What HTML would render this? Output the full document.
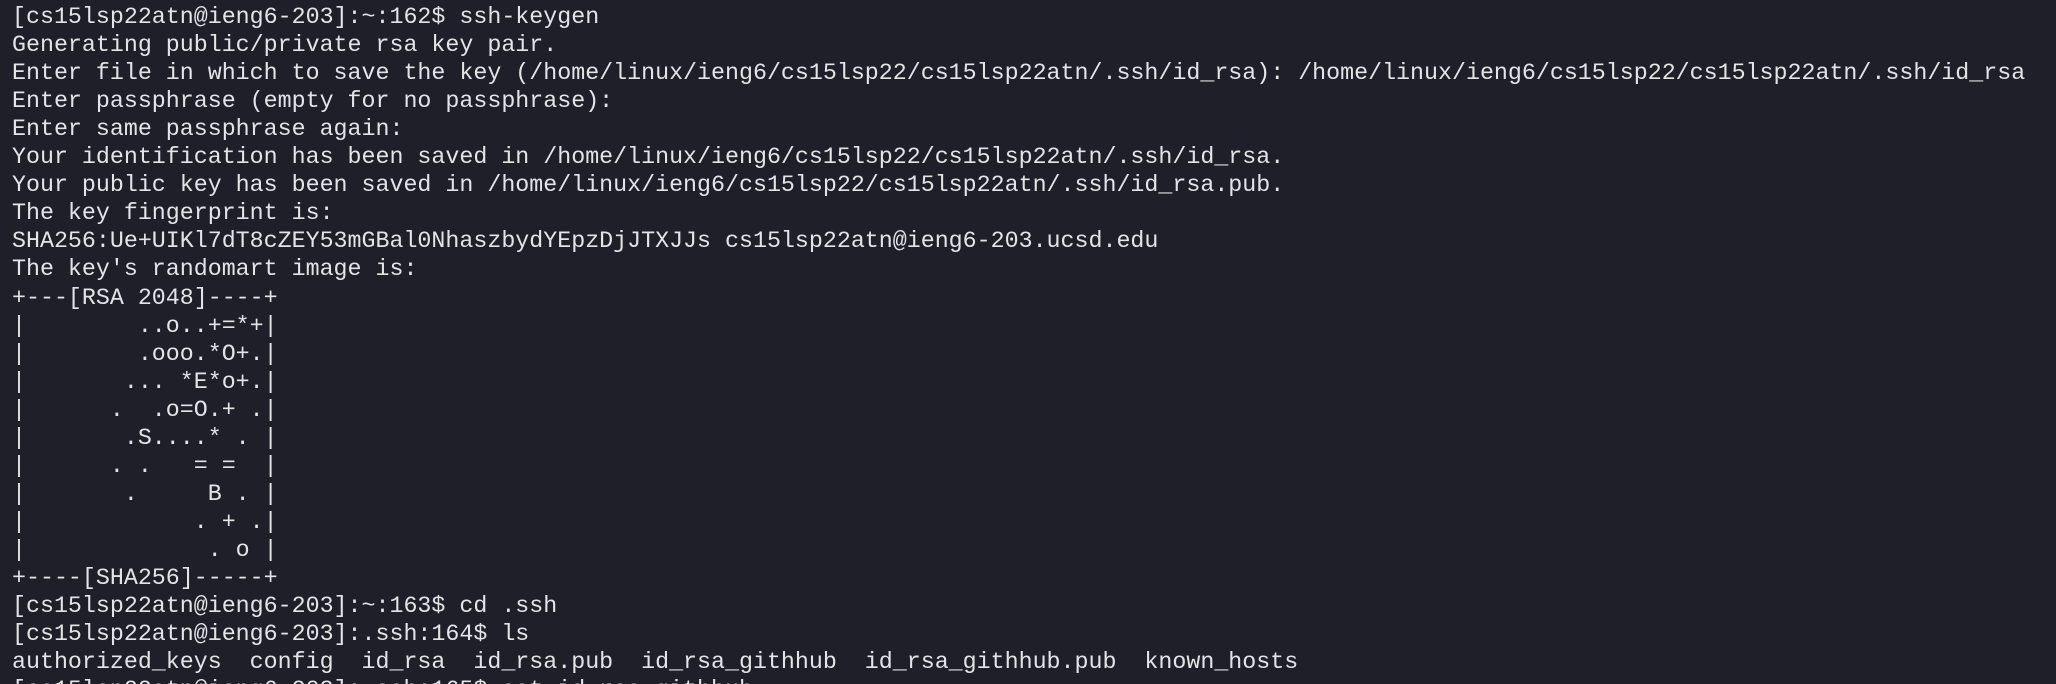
<!DOCTYPE html>
<html><head><meta charset="utf-8"><style>
html,body{margin:0;padding:0;background:#1e1f29;width:2056px;height:684px;overflow:hidden}
#w{position:relative;width:2056px;height:684px;overflow:hidden}
pre{position:absolute;left:12px;top:-25px;margin:0;font-family:"Liberation Mono","DejaVu Sans Mono",monospace;font-size:23.3px;line-height:28.05px;color:#e4e4e6;white-space:pre}
</style></head><body><div id="w"><pre>[cs15lsp22atn@ieng6-203]:~:161$ cd ~/.ssh
[cs15lsp22atn@ieng6-203]:~:162$ ssh-keygen
Generating public/private rsa key pair.
Enter file in which to save the key (/home/linux/ieng6/cs15lsp22/cs15lsp22atn/.ssh/id_rsa): /home/linux/ieng6/cs15lsp22/cs15lsp22atn/.ssh/id_rsa
Enter passphrase (empty for no passphrase):
Enter same passphrase again:
Your identification has been saved in /home/linux/ieng6/cs15lsp22/cs15lsp22atn/.ssh/id_rsa.
Your public key has been saved in /home/linux/ieng6/cs15lsp22/cs15lsp22atn/.ssh/id_rsa.pub.
The key fingerprint is:
SHA256:Ue+UIKl7dT8cZEY53mGBal0NhaszbydYEpzDjJTXJJs cs15lsp22atn@ieng6-203.ucsd.edu
The key's randomart image is:
+---[RSA 2048]----+
|        ..o..+=*+|
|        .ooo.*O+.|
|       ... *E*o+.|
|      .  .o=O.+ .|
|       .S....* . |
|      . .   = =  |
|       .     B . |
|            . + .|
|             . o |
+----[SHA256]-----+
[cs15lsp22atn@ieng6-203]:~:163$ cd .ssh
[cs15lsp22atn@ieng6-203]:.ssh:164$ ls
authorized_keys  config  id_rsa  id_rsa.pub  id_rsa_githhub  id_rsa_githhub.pub  known_hosts
[cs15lsp22atn@ieng6-203]:.ssh:165$ cat id_rsa_githhub</pre></div></body></html>
